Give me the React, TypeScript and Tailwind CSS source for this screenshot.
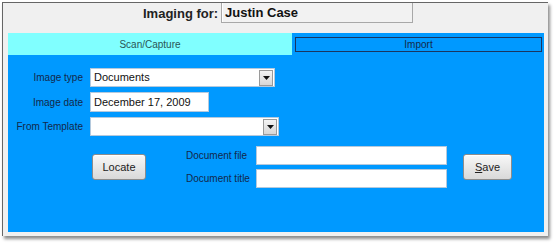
import React from "react";

const font = { fontFamily: '"Liberation Sans", Arial, sans-serif' };

const DropArrow = () => (
  <div className="flex h-[16px] w-[14px] items-center justify-center border border-[#9a9a9a] bg-gradient-to-b from-[#f4f4f4] to-[#d6d6d6]">
    <svg width="7" height="4" viewBox="0 0 7 4">
      <path d="M0 0h7L3.5 4z" fill="#111" />
    </svg>
  </div>
);

const Select = ({ value, width }: { value: string; width: string }) => (
  <div className={`flex h-[19px] items-center justify-between border border-[#b4c9dd] bg-white pl-[3px] pr-[1px] ${width}`}>
    <span className="text-[11px] text-[#111]">{value}</span>
    <DropArrow />
  </div>
);

const Button = ({ children }: { children: React.ReactNode }) => (
  <div className="flex h-[26px] items-center justify-center rounded-[3px] border border-[#8c8c8c] bg-gradient-to-b from-[#f8f8f8] to-[#d9d9d9] text-[11px] text-[#222] shadow-[inset_0_1px_0_#fff]">
    {children}
  </div>
);

export default function App() {
  return (
    <div className="h-[244px] w-[559px] bg-white pl-[2px] pt-[2px]" style={font}>
      <div className="flex h-[234px] w-[546px] flex-col border-l border-t border-[#666] bg-[#f0f0f0] pb-[4px] pl-[5px] pr-[4px] shadow-[2px_3px_3px_rgba(0,0,0,0.45)]">
        {/* header */}
        <div className="flex h-[30px] items-start pl-[135px]">
          <span className="text-[13px] font-bold leading-[21px] text-[#222]">Imaging for:</span>
          <div className="ml-[3px] flex h-[20px] w-[192px] items-center border-b border-l border-r border-[#a8a8a8] bg-[#f2f2f2] pl-[3px] shadow-[inset_1px_0_0_#fff]">
            <span className="text-[13px] font-bold text-[#111]">Justin Case</span>
          </div>
        </div>

        {/* tabs */}
        <div className="flex h-[22px]">
          <div className="flex w-[284px] items-center justify-center bg-[#80ffff] text-[10px] text-[#2a5656]">
            Scan/Capture
          </div>
          <div className="flex-1 bg-[#0099ff] pb-[3px] pl-[3px] pr-[2px] pt-[4px]">
            <div className="flex h-[15px] items-center justify-center border border-[#1a3560] text-[10px] text-[#14294a]">
              Import
            </div>
          </div>
        </div>

        {/* panel */}
        <div className="flex-1 bg-[#0099ff] pt-[13px] text-[10px] text-[#13284a]">
          <div className="grid grid-cols-[75px_auto] items-center gap-x-[7px] gap-y-[5px]">
            <span className="text-right">Image type</span>
            <Select value="Documents" width="w-[185px]" />
            <span className="text-right">Image date</span>
            <div className="flex h-[20px] w-[119px] items-center border border-[#b4c9dd] bg-white pl-[3px] text-[11px] text-[#111]">
              December 17, 2009
            </div>
            <span className="text-right">From Template</span>
            <Select value="" width="w-[189px]" />
          </div>

          <div className="mt-[10px] flex items-center pl-[84px]">
            <div className="w-[54px]">
              <Button>Locate</Button>
            </div>
            <div className="ml-[40px] flex w-[70px] flex-col gap-[4px]">
              <span className="leading-[19px]">Document file</span>
              <span className="leading-[19px]">Document title</span>
            </div>
            <div className="flex flex-col gap-[4px]">
              <div className="h-[19px] w-[191px] border border-[#b4c9dd] bg-white" />
              <div className="h-[19px] w-[191px] border border-[#b4c9dd] bg-white" />
            </div>
            <div className="ml-[16px] w-[49px]">
              <Button>
                <span>
                  <span className="underline">S</span>ave
                </span>
              </Button>
            </div>
          </div>
        </div>
      </div>
    </div>
  );
}
